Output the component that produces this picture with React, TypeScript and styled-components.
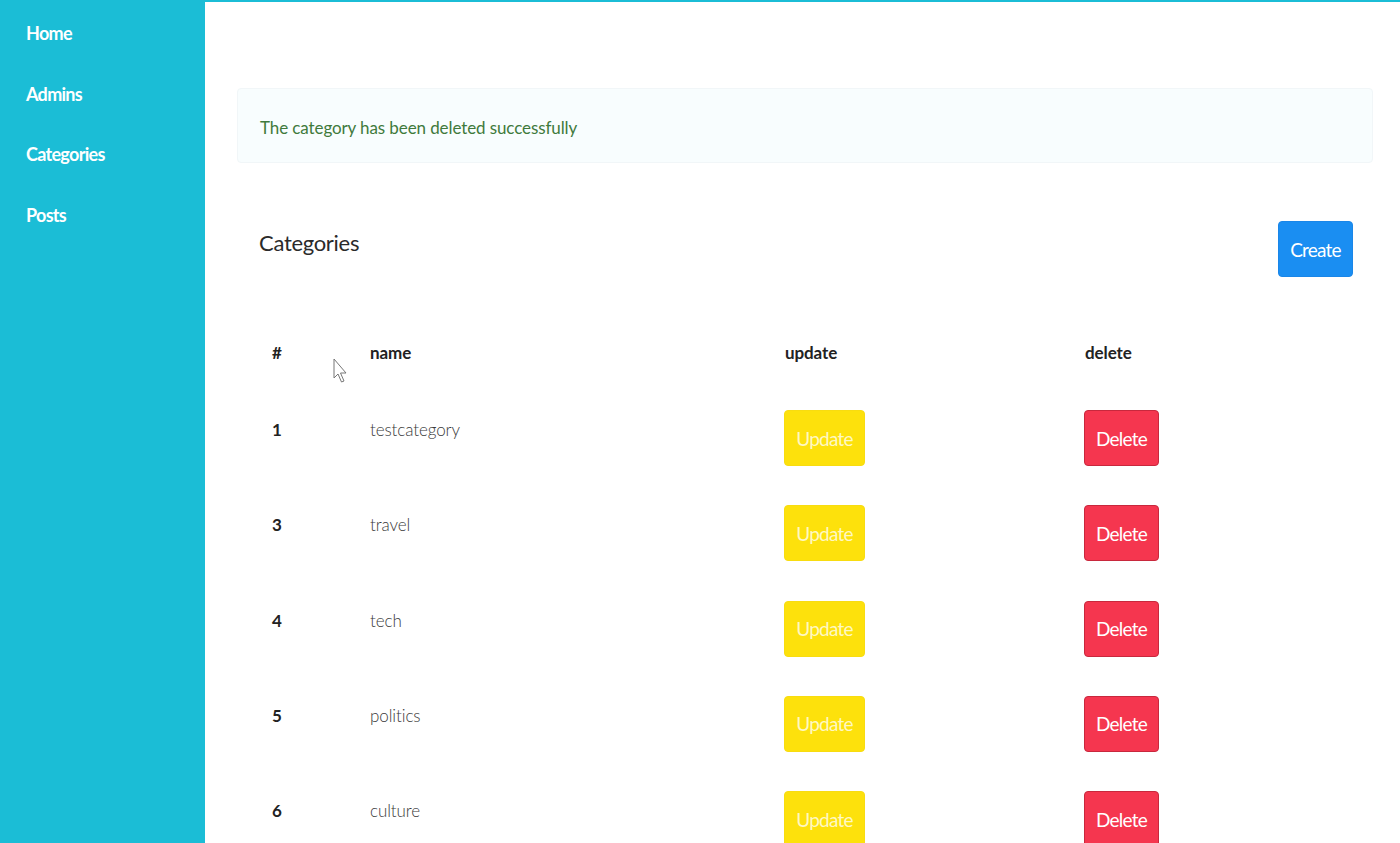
import React from "react";
import styled, { createGlobalStyle } from "styled-components";

const Global = createGlobalStyle`
  html, body { margin: 0; padding: 0; background: #fff; }
  body { font-family: Lato, "Open Sans", sans-serif; color: #222; }
  * { box-sizing: border-box; }
`;

const Page = styled.div`
  display: flex;
  min-height: 843px;
  width: 1400px;
  position: relative;
  overflow: hidden;
`;

const Sidebar = styled.nav`
  width: 205px;
  flex: 0 0 205px;
  background: #1bbdd6;
  display: flex;
  flex-direction: column;
  padding: 21px 0 0 26px;
  gap: 36.5px;
`;

const NavLink = styled.a`
  color: #fff;
  font-size: 18px;
  font-weight: 700;
  line-height: 24px;
  letter-spacing: -0.7px;
  text-decoration: none;
`;

const Main = styled.main`
  flex: 1;
  border-top: 2px solid #1bbdd6;
  padding: 86px 27px 0 32px;
  display: flex;
  flex-direction: column;
`;

const Alert = styled.div`
  height: 75px;
  background: #f8fdfe;
  border: 1px solid #f1f6f8;
  border-radius: 4px;
  display: flex;
  align-items: center;
  padding: 0 22px;
  color: #3f7a3c;
  font-size: 17px;
  font-weight: 400;
  letter-spacing: -0.1px;
  padding-top: 4px;
`;

const HeaderRow = styled.div`
  margin-top: 58px;
  display: flex;
  align-items: center;
  justify-content: space-between;
  padding: 0 20px 0 22px;
  height: 56px;
`;

const Title = styled.h2`
  margin: 0;
  font-size: 22px;
  font-weight: 400;
  color: #2a2a2a;
  letter-spacing: -0.3px;
  position: relative;
  top: -7px;
`;

const Button = styled.button<{ $variant: "primary" | "warning" | "danger"; $w: number }>`
  width: ${(p) => p.$w}px;
  height: 56px;
  border-radius: 4px;
  font-family: Lato, "Open Sans", sans-serif;
  font-size: 19px;
  font-weight: 400;
  letter-spacing: -0.8px;
  cursor: pointer;
  padding: 0;
  background: ${(p) =>
    p.$variant === "primary" ? "#1a8ef2" : p.$variant === "warning" ? "#fde10c" : "#f5364f"};
  border: 1px solid
    ${(p) =>
      p.$variant === "primary" ? "#1a86e8" : p.$variant === "warning" ? "#f8dc10" : "#c8283d"};
  color: ${(p) => (p.$variant === "warning" ? "#fff8c4" : "#fff")};
`;

const Table = styled.div`
  margin-left: 22px;
  display: flex;
  flex-direction: column;
`;

const Row = styled.div<{ $head?: boolean }>`
  display: grid;
  grid-template-columns: 98px 415px 300px 1fr;
  align-items: start;
  height: ${(p) => (p.$head ? "123px" : "95.25px")};
  padding-top: ${(p) => (p.$head ? "56px" : "10px")};
`;

const Cell = styled.div<{ $bold?: boolean; $light?: boolean }>`
  padding-left: 13px;
  line-height: 40px;
  font-size: 17px;
  font-weight: ${(p) => (p.$bold ? 700 : p.$light ? 300 : 400)};
  color: ${(p) => (p.$light ? "#3a3a3a" : "#222")};
  letter-spacing: -0.1px;
`;

const BtnCell = styled.div`
  padding-left: 12px;
`;

const Cursor = styled.svg`
  position: absolute;
  left: 333px;
  top: 358px;
`;

const rows = [
  { id: 1, name: "testcategory" },
  { id: 3, name: "travel" },
  { id: 4, name: "tech" },
  { id: 5, name: "politics" },
  { id: 6, name: "culture" },
];

export default function App() {
  return (
    <>
      <Global />
      <Page>
        <Sidebar>
          <NavLink href="#">Home</NavLink>
          <NavLink href="#">Admins</NavLink>
          <NavLink href="#">Categories</NavLink>
          <NavLink href="#">Posts</NavLink>
        </Sidebar>
        <Main>
          <Alert>The category has been deleted successfully</Alert>
          <HeaderRow>
            <Title>Categories</Title>
            <Button $variant="primary" $w={75}>Create</Button>
          </HeaderRow>
          <Table>
            <Row $head>
              <Cell $bold>#</Cell>
              <Cell $bold>name</Cell>
              <Cell $bold>update</Cell>
              <Cell $bold>delete</Cell>
            </Row>
            {rows.map((r) => (
              <Row key={r.id}>
                <Cell $bold>{r.id}</Cell>
                <Cell $light>{r.name}</Cell>
                <BtnCell>
                  <Button $variant="warning" $w={81}>Update</Button>
                </BtnCell>
                <BtnCell>
                  <Button $variant="danger" $w={75}>Delete</Button>
                </BtnCell>
              </Row>
            ))}
          </Table>
        </Main>
        <Cursor width="14" height="26" viewBox="0 0 14 26">
          <path d="M1 1 L1 20 L5 16 L8.5 24 L11 23 L7.5 15 L13 15 Z" fill="#fff" stroke="#777" strokeWidth="1" />
        </Cursor>
      </Page>
    </>
  );
}
